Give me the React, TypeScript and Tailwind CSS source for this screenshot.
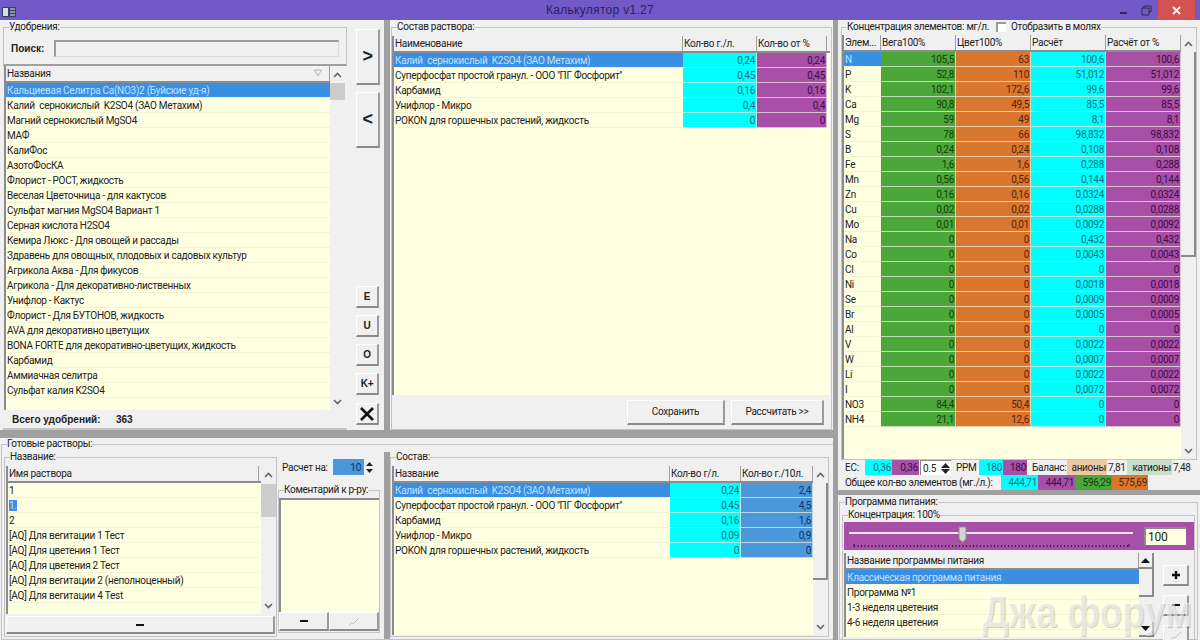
import type { ReactNode } from 'react';

type Column = { title: string; w: string; cell?: string };

const cyan = 'bg-[#00ffff] text-[#0b6f7c] text-right';
const purple = 'bg-[#a84fa8] text-[#3d0c42] text-right';
const green = 'bg-[#4ca73a] text-[#123d0a] text-right';
const orange = 'bg-[#d9772f] text-[#552106] text-right';
const steel = 'bg-[#4a98da] text-[#0a2f66] text-right';

const fertilizers = [
  'Кальциевая Селитра Ca(NO3)2 (Буйские уд-я)',
  'Калий  сернокислый  K2SO4 (ЗАО Метахим)',
  'Магний сернокислый MgSO4',
  'МАФ',
  'КалиФос',
  'АзотоФосКА',
  'Флорист - РОСТ, жидкость',
  'Веселая Цветочница - для кактусов',
  'Сульфат магния MgSO4 Вариант 1',
  'Серная кислота H2SO4',
  'Кемира Люкс - Для овощей и рассады',
  'Здравень для овощных, плодовых и садовых культур',
  'Агрикола Аква - Для фикусов',
  'Агрикола - Для декоративно-лиственных',
  'Унифлор - Кактус',
  'Флорист - Для БУТОНОВ, жидкость',
  'AVA для декоративно цветущих',
  'BONA FORTE для декоративно-цветущих, жидкость',
  'Карбамид',
  'Аммиачная селитра',
  'Сульфат калия K2SO4',
].map((name) => [name]);

const solution = [
  ['Калий  сернокислый  K2SO4 (ЗАО Метахим)', '0,24', '0,24'],
  ["Суперфосфат простой гранул. - ООО ''ПГ Фосфорит''", '0,45', '0,45'],
  ['Карбамид', '0,16', '0,16'],
  ['Унифлор - Микро', '0,4', '0,4'],
  ['POKON для горшечных растений, жидкость', '0', '0'],
];

const saved = [
  ['Калий  сернокислый  K2SO4 (ЗАО Метахим)', '0,24', '2,4'],
  ["Суперфосфат простой гранул. - ООО ''ПГ Фосфорит''", '0,45', '4,5'],
  ['Карбамид', '0,16', '1,6'],
  ['Унифлор - Микро', '0,09', '0,9'],
  ['POKON для горшечных растений, жидкость', '0', '0'],
];

const solutions = [
  '1',
  '1.',
  '2',
  '[AQ] Для вегитации 1 Тест',
  '[AQ] Для цветения 1 Тест',
  '[AQ] Для цветения 2 Тест',
  '[AQ] Для вегитации 2 (неполноценный)',
  '[AQ] Для вегитации 4 Test',
].map((name) => [name]);

const elements = [
  ['N', '105,5', '63', '100,6', '100,6'],
  ['P', '52,8', '110', '51,012', '51,012'],
  ['K', '102,1', '172,6', '99,6', '99,6'],
  ['Ca', '90,8', '49,5', '85,5', '85,5'],
  ['Mg', '59', '49', '8,1', '8,1'],
  ['S', '78', '66', '98,832', '98,832'],
  ['B', '0,24', '0,24', '0,108', '0,108'],
  ['Fe', '1,6', '1,6', '0,288', '0,288'],
  ['Mn', '0,56', '0,56', '0,144', '0,144'],
  ['Zn', '0,16', '0,16', '0,0324', '0,0324'],
  ['Cu', '0,02', '0,02', '0,0288', '0,0288'],
  ['Mo', '0,01', '0,01', '0,0092', '0,0092'],
  ['Na', '0', '0', '0,432', '0,432'],
  ['Co', '0', '0', '0,0043', '0,0043'],
  ['Cl', '0', '0', '0', '0'],
  ['Ni', '0', '0', '0,0018', '0,0018'],
  ['Se', '0', '0', '0,0009', '0,0009'],
  ['Br', '0', '0', '0,0005', '0,0005'],
  ['Al', '0', '0', '0', '0'],
  ['V', '0', '0', '0,0022', '0,0022'],
  ['W', '0', '0', '0,0007', '0,0007'],
  ['Li', '0', '0', '0,0022', '0,0022'],
  ['I', '0', '0', '0,0072', '0,0072'],
  ['NO3', '84,4', '50,4', '0', '0'],
  ['NH4', '21,1', '12,6', '0', '0'],
];

const programs = [
  'Классическая программа питания',
  'Программа №1',
  '1-3 неделя цветения',
  '4-6 неделя цветения',
].map((name) => [name]);

// One grid of the old WinForms app: raised header, cream rows, first row picked.
function Grid({
  columns,
  rows,
  selected = 0,
  selectFit = false,
  sortMark = false,
}: {
  columns: Column[];
  rows: string[][];
  selected?: number;
  selectFit?: boolean;
  sortMark?: boolean;
}) {
  return (
    <div className="flex min-w-0 flex-1 flex-col overflow-hidden bg-[#ffffe1]">
      <div className="flex h-[17px] shrink-0 border-b-2 border-[#8c8c8c] bg-[#f0f0f0]">
        {columns.map((col) => (
          <div
            key={col.title}
            className={`${col.w} relative flex items-center overflow-hidden border-r border-[#a0a0a0] pl-[1px]`}
          >
            {col.title}
            {sortMark && (
              <svg className="absolute right-[7px] top-[3px]" width="8" height="8" viewBox="0 0 8 8">
                <path d="M0.5 1 H7.5 L4 7 Z" fill="none" stroke="#b5b5b5" />
              </svg>
            )}
          </div>
        ))}
      </div>
      {rows.map((row, r) => (
        <div key={r} className="flex h-[15px] shrink-0">
          {row.map((value, c) => {
            const col = columns[c];
            const picked = r === selected && c === 0;
            return (
              <div
                key={c}
                className={`${col.w} ${col.cell ?? ''} ${
                  col.cell ? 'border-r border-b border-[#f4f4e4]/70' : 'border-b border-[#f3f3d6]'
                } overflow-hidden whitespace-pre px-[1px] leading-[15px] ${
                  picked && !selectFit ? 'bg-[#3a8fe2] text-[#bfe0ff]' : ''
                }`}
              >
                {picked && selectFit ? <span className="bg-[#3a8fe2] text-[#bfe0ff]">{value}</span> : value}
              </div>
            );
          })}
        </div>
      ))}
    </div>
  );
}

function Chevron({ up }: { up?: boolean }) {
  return (
    <svg width="9" height="6" viewBox="0 0 9 6">
      <path d={up ? 'M1 5 L4.5 1.5 L8 5' : 'M1 1 L4.5 4.5 L8 1'} fill="none" stroke="#666" strokeWidth="1.6" />
    </svg>
  );
}

// thumb is a whole class string so Tailwind can see it
function Scrollbar({ thumb }: { thumb: string }) {
  return (
    <div className="flex w-[15px] shrink-0 flex-col bg-[#f0f0f0]">
      <div className="flex h-[17px] shrink-0 items-center justify-center">
        <Chevron up />
      </div>
      <div className="flex-1 overflow-hidden">
        <div className={thumb} />
      </div>
      <div className="flex h-[17px] shrink-0 items-center justify-center">
        <Chevron />
      </div>
    </div>
  );
}

function Group({ title, className, children }: { title: string; className: string; children?: ReactNode }) {
  return (
    <fieldset className={`${className} min-w-0 border border-[#c4c4c4]`}>
      <legend className="ml-[5px] leading-[12px]">{title}</legend>
      {children}
    </fieldset>
  );
}

function Bevel({ className, children }: { className: string; children?: ReactNode }) {
  return (
    <button
      type="button"
      className={`${className} flex shrink-0 items-center justify-center border-t border-l border-t-white border-l-white border-r-2 border-b-2 border-r-[#9a9a9a] border-b-[#8a8a8a] bg-[#f0f0f0]`}
    >
      {children}
    </button>
  );
}

function Fill({ className, children }: { className: string; children: ReactNode }) {
  return <span className={`${className} h-[15px] shrink-0 pr-[1px] text-right leading-[15px]`}>{children}</span>;
}

const sunken = 'border-l-2 border-[#8c8c8c]';
const boldFont = "font-['Liberation_Sans',sans-serif] text-[10px] font-bold tracking-normal";

export default function App() {
  return (
    <div className="relative flex h-[640px] w-[1200px] flex-col overflow-hidden whitespace-nowrap bg-[#f0f0f0] font-['Roboto',sans-serif] text-[10px] tracking-[-0.28px] text-[#222]">
      <header className="flex h-5 shrink-0 items-center bg-[#7159c6]">
        <div className="w-[100px] pl-[2px]">
          <svg width="14" height="10" viewBox="0 0 14 10" className="mt-[4px]">
            <rect width="14" height="10" fill="#33415f" />
            <rect x="1" y="1" width="5" height="8" fill="#d6dde6" />
            <path d="M8 2 H13 M8 5 H13 M8 8 H13" stroke="#e6e6e6" />
          </svg>
        </div>
        <span className="flex-1 text-center font-['Liberation_Sans',sans-serif] text-[12px] tracking-[0.3px] text-[#2a1f5e]">
          Калькулятор v1.27
        </span>
        <div className="flex h-5 w-[100px] items-center">
          <svg width="58" height="14" viewBox="0 0 58 14" fill="none" stroke="#2d2a55">
            <path d="M20 10 H27" strokeWidth="2" />
            <path d="M42 5 H49 V12 H42 Z M44 5 V3 H51 V9 H49" />
          </svg>
          <div className="flex h-5 w-[37px] items-center justify-center bg-[#d2534f]">
            <svg width="9" height="9" viewBox="0 0 9 9">
              <path d="M1 1 L8 8 M8 1 L1 8" stroke="#fff" strokeWidth="1.8" />
            </svg>
          </div>
        </div>
      </header>

      <div className="flex min-h-0 flex-1">
        <div className="flex w-[833px] shrink-0 flex-col">
          <div className="flex h-[410px] shrink-0">
            <div className="flex w-[384px] shrink-0">
              <section className="flex w-[350px] shrink-0 flex-col pl-[3px] pr-[3px]">
                <Group title="Удобрения:" className="mt-[1px] h-[45px] shrink-0 border-b-2 border-b-[#a0a0a0]">
                  <div className="flex items-center pl-[7px] pr-[7px] pt-[7px]">
                    <b className={`${boldFont} mr-[9px] w-[34px] shrink-0`}>Поиск:</b>
                    <div className="h-[17px] flex-1 border-t-2 border-l-2 border-[#9a9a9a] border-b border-r border-b-[#dcdcdc] border-r-[#dcdcdc]" />
                  </div>
                </Group>
                <div className={`${sunken} ml-[1px] mr-[2px] flex h-[344px] shrink-0`}>
                  <Grid columns={[{ title: 'Названия', w: 'w-[325px]' }]} rows={fertilizers} sortMark />
                  <Scrollbar thumb="h-[17px] bg-[#cdcdcd]" />
                </div>
                <div className={`${boldFont} flex h-[20px] items-center border-b-2 border-b-[#c4c4c4] pl-[9px]`}>
                  <span className="w-[104px]">Всего удобрений:</span>
                  <span>363</span>
                </div>
              </section>
              <nav className="flex w-[30px] shrink-0 flex-col items-start pl-[6px] pt-[9px] font-['Liberation_Sans',sans-serif] text-[10px] font-bold">
                <Bevel className="h-[56px] w-[24px] text-[18px]">&gt;</Bevel>
                <Bevel className="mb-[138px] mt-[7px] h-[56px] w-[24px] text-[18px]">&lt;</Bevel>
                <Bevel className="mb-[7px] h-[22px] w-[23px]">E</Bevel>
                <Bevel className="mb-[7px] h-[22px] w-[23px]">U</Bevel>
                <Bevel className="mb-[7px] h-[22px] w-[23px]">O</Bevel>
                <Bevel className="mb-[8px] h-[22px] w-[23px]">K+</Bevel>
                <Bevel className="h-[22px] w-[23px]">
                  <svg width="14" height="14" viewBox="0 0 14 14">
                    <path d="M1 1 L13 13 M13 1 L1 13" stroke="#111" strokeWidth="2.6" />
                  </svg>
                </Bevel>
              </nav>
            </div>
            <div className="w-[6px] shrink-0 bg-[#a0a0a0]" />
            <section className="flex min-w-0 flex-1 flex-col">
              <Group title="Состав раствора:" className="mx-[1px] mt-[1px] flex flex-1 flex-col">
                <div className={`${sunken} mr-[1px] mt-[3px] flex h-[359px] shrink-0`}>
                  <Grid
                    columns={[
                      { title: 'Наименование', w: 'w-[289px]' },
                      { title: 'Кол-во г./л.', w: 'w-[74px]', cell: cyan },
                      { title: 'Кол-во от %', w: 'w-[70px]', cell: purple },
                    ]}
                    rows={solution}
                  />
                </div>
                <div className="flex flex-1 items-center justify-end gap-[6px] pr-[7px]">
                  <Bevel className="h-[25px] w-[98px]">Сохранить</Bevel>
                  <Bevel className="h-[25px] w-[93px]">Рассчитать &gt;&gt;</Bevel>
                </div>
              </Group>
            </section>
          </div>

          <div className="h-[8px] shrink-0 bg-[#a0a0a0]" />

          <Group title="Готовые растворы:" className="ml-[1px] flex min-h-0 flex-1 border-r-0">
            <div className="flex h-full min-h-0 flex-col">
              <div className="flex min-h-0 flex-1">
                <div className="flex w-[382px] shrink-0">
                  <div className="flex w-[275px] shrink-0 flex-col pl-[2px]">
                    <Group title="Название:" className="mt-[1px] flex h-[186px] shrink-0 flex-col">
                      <div className={`${sunken} ml-[1px] mt-[3px] flex h-[148px] shrink-0`}>
                        <Grid columns={[{ title: 'Имя раствора', w: 'w-[251px]' }]} rows={solutions} selected={1} selectFit />
                        <Scrollbar thumb="mt-[1px] h-[33px] bg-[#cdcdcd]" />
                      </div>
                      <Bevel className="ml-[1px] mt-[2px] h-[18px] w-[269px]">
                        <span className="block h-[2px] w-[8px] bg-[#111]" />
                      </Bevel>
                    </Group>
                  </div>
                  <div className="flex w-[107px] shrink-0 flex-col pl-[1px]">
                    <div className="mt-[6px] flex h-[22px] shrink-0 items-center pl-[4px]">
                      <span className="w-[51px]">Расчет на:</span>
                      <div className="flex h-[16px] w-[42px] items-center justify-end bg-[#4a98da] text-[#0a2f66]">
                        <span className="pr-[3px]">10</span>
                        <div className="flex h-[16px] w-[11px] flex-col items-center justify-center gap-[3px] bg-[#f0f0f0]">
                          <svg width="7" height="4" viewBox="0 0 7 4"><path d="M0 4 L3.5 0 L7 4 Z" fill="#222" /></svg>
                          <svg width="7" height="4" viewBox="0 0 7 4"><path d="M0 0 L3.5 4 L7 0 Z" fill="#222" /></svg>
                        </div>
                      </div>
                    </div>
                    <Group title="Коментарий к р-ру:" className="mt-[6px] flex h-[149px] w-[102px] shrink-0 flex-col">
                      <div className="mt-[2px] h-[114px] shrink-0 border-t-2 border-l-2 border-[#8c8c8c] bg-[#ffffe1]" />
                      <div className="flex">
                        <Bevel className="h-[19px] w-[50px]">
                          <span className="block h-[2px] w-[8px] bg-[#111]" />
                        </Bevel>
                        <Bevel className="h-[19px] w-[50px]">
                          <svg width="12" height="9" viewBox="0 0 12 9">
                            <path d="M1 8 L4 6 L5 7 L11 1" fill="none" stroke="#c4c4c4" />
                          </svg>
                        </Bevel>
                      </div>
                    </Group>
                  </div>
                </div>
                <div className="mt-[2px] w-[6px] shrink-0 bg-[#a0a0a0]" />
                <section className="flex min-w-0 flex-1 pr-[5px]">
                  <Group title="Состав:" className="mt-[1px] flex h-[186px] flex-1">
                    <div className={`${sunken} ml-[1px] mt-[3px] flex h-[169px] flex-1`}>
                      <Grid
                        columns={[
                          { title: 'Название', w: 'w-[276px]' },
                          { title: 'Кол-во г/л.', w: 'w-[71px]', cell: cyan },
                          { title: 'Кол-во г./10л.', w: 'w-[72px]', cell: steel },
                        ]}
                        rows={saved}
                      />
                      <Scrollbar thumb="h-[97px] border-b-2 border-r-2 border-[#8a8a8a] bg-[#f0f0f0]" />
                    </div>
                  </Group>
                </section>
              </div>
            </div>
          </Group>
        </div>

        <div className="w-[5px] shrink-0 bg-[#a0a0a0]" />

        <aside className="flex min-w-0 flex-1 flex-col">
          <fieldset className="mx-[3px] mt-[1px] min-w-0 border border-[#c4c4c4]">
            <legend className="ml-[5px] flex items-center leading-[12px]">
              <span className="w-[149px]">Концентрация элементов: мг/л.</span>
              <span className="mr-[5px] inline-block h-[10px] w-[10px] border-t-2 border-l-2 border-[#9a9a9a] bg-white" />
              Отобразить в молях
            </legend>
            <div className={`${sunken} mt-[2px] flex h-[424px]`}>
              <Grid
                columns={[
                  { title: 'Элем...', w: 'w-[37px]' },
                  { title: 'Вега100%', w: 'w-[75px]', cell: green },
                  { title: 'Цвет100%', w: 'w-[75px]', cell: orange },
                  { title: 'Расчёт', w: 'w-[75px]', cell: cyan },
                  { title: 'Расчёт от %', w: 'w-[75px]', cell: purple },
                ]}
                rows={elements}
              />
              <Scrollbar thumb="h-[205px] border-b-2 border-r-2 border-[#8a8a8a] bg-[#f0f0f0]" />
            </div>
          </fieldset>
          <div className="flex h-[15px] shrink-0 items-center pl-[7px]">
            <span className="w-[20px] shrink-0">EC:</span>
            <Fill className="w-[27px] bg-[#00ffff] text-[#0b6f7c]">0,36</Fill>
            <Fill className="w-[27px] bg-[#a84fa8] text-[#3d0c42]">0,36</Fill>
            <div className="ml-[1px] flex h-[15px] w-[31px] shrink-0 items-center justify-between border-t border-l border-[#8c8c8c] bg-white pl-[2px]">
              0.5
              <div className="flex flex-col gap-[1px] pr-[1px]">
                <svg width="9" height="5" viewBox="0 0 9 5"><path d="M0 5 L4.5 0 L9 5 Z" fill="#222" /></svg>
                <svg width="9" height="5" viewBox="0 0 9 5"><path d="M0 0 L4.5 5 L9 0 Z" fill="#222" /></svg>
              </div>
            </div>
            <span className="ml-[5px] w-[23px] shrink-0">PPM</span>
            <Fill className="w-[24px] bg-[#00ffff] text-[#0b6f7c]">180</Fill>
            <Fill className="w-[24px] bg-[#a84fa8] text-[#3d0c42]">180</Fill>
            <span className="ml-[5px] w-[35px] shrink-0">Баланс:</span>
            <Fill className="w-[40px] bg-[#ebc9a6]">анионы</Fill>
            <span className="ml-[1px] w-[19px] shrink-0">7,81</span>
            <Fill className="w-[45px] bg-[#c9dfc9]">катионы</Fill>
            <span className="ml-[1px]">7,48</span>
          </div>
          <div className="flex h-[15px] shrink-0 items-center pl-[7px]">
            <span className="w-[156px] shrink-0">Общее кол-во элементов (мг./л.):</span>
            <Fill className="w-[37px] bg-[#00ffff] text-[#0b6f7c]">444,71</Fill>
            <Fill className="w-[37px] bg-[#a84fa8] text-[#3d0c42]">444,71</Fill>
            <Fill className="w-[37px] bg-[#4ca73a] text-[#123d0a]">596,29</Fill>
            <Fill className="w-[36px] bg-[#d9772f] text-[#552106]">575,69</Fill>
          </div>
          <div className="h-[5px] shrink-0 bg-[#a0a0a0]" />
          <Group title="Программа питания:" className="ml-[1px] mr-[2px] mt-[1px] flex min-h-0 flex-1 flex-col">
            <Group title="Концентрация: 100%" className="mx-[2px] mt-[1px] flex min-h-0 flex-1 flex-col border-b-0">
              <div className="ml-[1px] mt-[1px] flex h-[28px] shrink-0 items-center bg-[#a84fa8]">
                <svg width="296" height="28" viewBox="0 0 296 28" className="shrink-0">
                  <path d="M5 11 H289" stroke="#f2e4f2" strokeWidth="2" />
                  <path d="M10 25 V22 M285 25 V22" stroke="#3d0c42" />
                  <path d="M10 24 H285" stroke="#3d0c42" strokeDasharray="1 2.5" strokeWidth="2" />
                  <path d="M115 5 H122 V17 L118.5 20 L115 17 Z" fill="#d4d4d4" stroke="#8c8c8c" />
                </svg>
                <div className="ml-[4px] flex h-[18px] w-[42px] items-center border-t-2 border-l-2 border-[#8c8c8c] bg-[#ffffe1] pl-[2px] text-[12px]">
                  100
                </div>
              </div>
              <div className="ml-[1px] mt-[3px] flex min-h-0 flex-1 items-start">
                <div className="flex h-[84px] w-[310px] shrink-0 overflow-hidden border-l-2 border-[#8c8c8c]">
                  <Grid columns={[{ title: 'Название программы питания', w: 'w-[293px]' }]} rows={programs} />
                  <div className="flex w-[15px] shrink-0 flex-col items-center bg-[#f0f0f0]">
                    <div className="flex h-[16px] w-[15px] shrink-0 items-center justify-center border-b-2 border-r-2 border-[#8a8a8a]">
                      <svg width="9" height="5" viewBox="0 0 9 5"><path d="M0 5 L4.5 0 L9 5 Z" fill="#111" /></svg>
                    </div>
                    <div className="h-[28px] w-[15px] shrink-0 border-b-2 border-r-2 border-[#8a8a8a]" />
                    <div className="mt-[25px] flex h-[15px] w-[15px] shrink-0 items-center justify-center border-b-2 border-r-2 border-[#8a8a8a]">
                      <svg width="9" height="5" viewBox="0 0 9 5"><path d="M0 0 L4.5 5 L9 0 Z" fill="#111" /></svg>
                    </div>
                  </div>
                </div>
                <div className="ml-[9px] flex flex-col gap-[9px] pt-[12px]">
                  <Bevel className="h-[21px] w-[26px]">
                    <svg width="10" height="10" viewBox="0 0 10 10"><path d="M5 1 V9 M1 5 H9" stroke="#111" strokeWidth="2.4" /></svg>
                  </Bevel>
                  <Bevel className="h-[21px] w-[26px]">
                    <span className="block h-[2px] w-[8px] bg-[#111]" />
                  </Bevel>
                  <Bevel className="h-[21px] w-[26px]">
                    <svg width="12" height="9" viewBox="0 0 12 9">
                      <path d="M1 8 L4 6 L5 7 L11 1" fill="none" stroke="#c4c4c4" />
                    </svg>
                  </Bevel>
                </div>
              </div>
            </Group>
          </Group>
        </aside>
      </div>

      <div className="pointer-events-none absolute bottom-[6px] right-[8px] origin-right scale-x-[0.85] select-none font-['Liberation_Sans',sans-serif] text-[44px] font-bold leading-[44px] tracking-normal text-white/55 [text-shadow:1px_1px_1px_rgba(0,0,0,0.2)]">
        Джа форум
      </div>
    </div>
  );
}
